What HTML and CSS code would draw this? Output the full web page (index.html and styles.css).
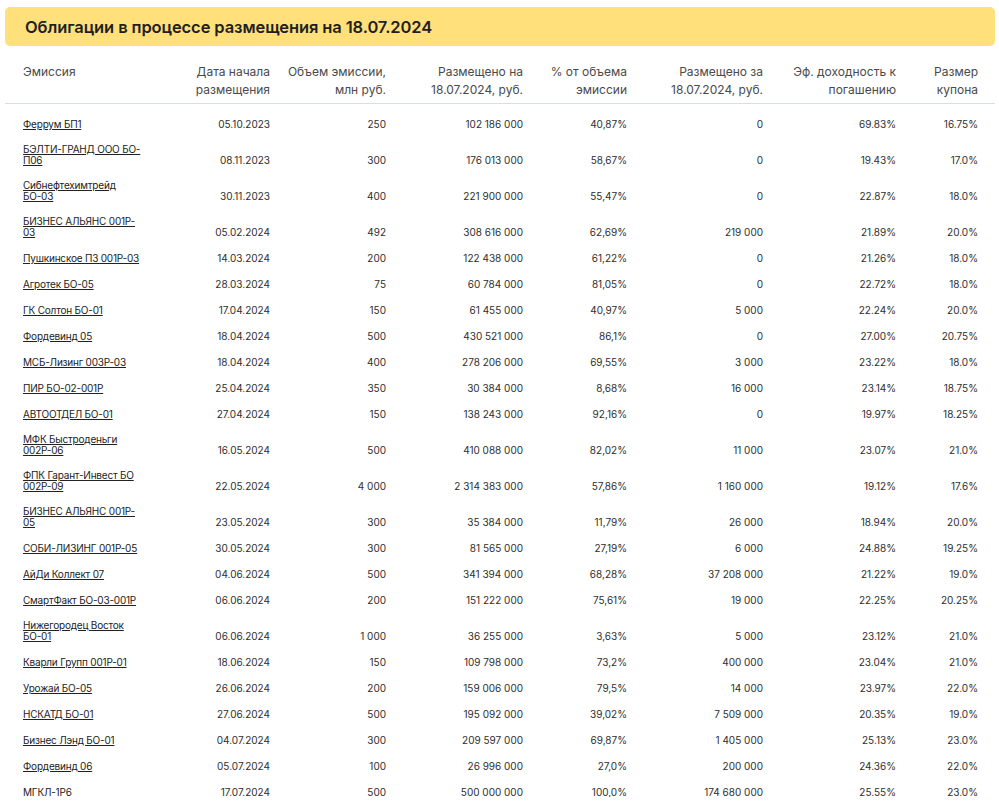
FILE: index.html
```html
<!DOCTYPE html>
<html lang="ru">
<head>
<meta charset="utf-8">
<title>Облигации в процессе размещения</title>
<link rel="stylesheet" href="styles.css">
</head>
<body>
<div class="page">
  <div class="banner"><h1 class="banner-title">Облигации в процессе размещения на 18.07.2024</h1></div>
  <table class="bonds">
    <colgroup>
      <col class="c-name"><col class="c-date"><col class="c-vol"><col class="c-placed"><col class="c-pct"><col class="c-day"><col class="c-yield"><col class="c-coupon">
    </colgroup>
    <thead>
      <tr>
        <th class="left">Эмиссия</th>
        <th>Дата начала<br>размещения</th>
        <th>Объем эмиссии,<br>млн руб.</th>
        <th>Размещено на<br>18.07.2024, руб.</th>
        <th>% от объема<br>эмиссии</th>
        <th>Размещено за<br>18.07.2024, руб.</th>
        <th>Эф. доходность к<br>погашению</th>
        <th>Размер<br>купона</th>
      </tr>
    </thead>
    <tbody>
      <tr><td class="left"><a href="#">Феррум БП1</a></td><td>05.10.2023</td><td>250</td><td>102 186 000</td><td>40,87%</td><td>0</td><td>69.83%</td><td>16.75%</td></tr>
      <tr><td class="left"><a href="#">БЭЛТИ-ГРАНД ООО БО-<br>П06</a></td><td>08.11.2023</td><td>300</td><td>176 013 000</td><td>58,67%</td><td>0</td><td>19.43%</td><td>17.0%</td></tr>
      <tr><td class="left"><a href="#">Сибнефтехимтрейд<br>БО-03</a></td><td>30.11.2023</td><td>400</td><td>221 900 000</td><td>55,47%</td><td>0</td><td>22.87%</td><td>18.0%</td></tr>
      <tr><td class="left"><a href="#">БИЗНЕС АЛЬЯНС 001Р-<br>03</a></td><td>05.02.2024</td><td>492</td><td>308 616 000</td><td>62,69%</td><td>219 000</td><td>21.89%</td><td>20.0%</td></tr>
      <tr><td class="left"><a href="#">Пушкинское ПЗ 001Р-03</a></td><td>14.03.2024</td><td>200</td><td>122 438 000</td><td>61,22%</td><td>0</td><td>21.26%</td><td>18.0%</td></tr>
      <tr><td class="left"><a href="#">Агротек БО-05</a></td><td>28.03.2024</td><td>75</td><td>60 784 000</td><td>81,05%</td><td>0</td><td>22.72%</td><td>18.0%</td></tr>
      <tr><td class="left"><a href="#">ГК Солтон БО-01</a></td><td>17.04.2024</td><td>150</td><td>61 455 000</td><td>40,97%</td><td>5 000</td><td>22.24%</td><td>20.0%</td></tr>
      <tr><td class="left"><a href="#">Фордевинд 05</a></td><td>18.04.2024</td><td>500</td><td>430 521 000</td><td>86,1%</td><td>0</td><td>27.00%</td><td>20.75%</td></tr>
      <tr><td class="left"><a href="#">МСБ-Лизинг 003Р-03</a></td><td>18.04.2024</td><td>400</td><td>278 206 000</td><td>69,55%</td><td>3 000</td><td>23.22%</td><td>18.0%</td></tr>
      <tr><td class="left"><a href="#">ПИР БО-02-001Р</a></td><td>25.04.2024</td><td>350</td><td>30 384 000</td><td>8,68%</td><td>16 000</td><td>23.14%</td><td>18.75%</td></tr>
      <tr><td class="left"><a href="#">АВТООТДЕЛ БО-01</a></td><td>27.04.2024</td><td>150</td><td>138 243 000</td><td>92,16%</td><td>0</td><td>19.97%</td><td>18.25%</td></tr>
      <tr><td class="left"><a href="#">МФК Быстроденьги<br>002Р-06</a></td><td>16.05.2024</td><td>500</td><td>410 088 000</td><td>82,02%</td><td>11 000</td><td>23.07%</td><td>21.0%</td></tr>
      <tr><td class="left"><a href="#">ФПК Гарант-Инвест БО<br>002Р-09</a></td><td>22.05.2024</td><td>4 000</td><td>2 314 383 000</td><td>57,86%</td><td>1 160 000</td><td>19.12%</td><td>17.6%</td></tr>
      <tr><td class="left"><a href="#">БИЗНЕС АЛЬЯНС 001Р-<br>05</a></td><td>23.05.2024</td><td>300</td><td>35 384 000</td><td>11,79%</td><td>26 000</td><td>18.94%</td><td>20.0%</td></tr>
      <tr><td class="left"><a href="#">СОБИ-ЛИЗИНГ 001Р-05</a></td><td>30.05.2024</td><td>300</td><td>81 565 000</td><td>27,19%</td><td>6 000</td><td>24.88%</td><td>19.25%</td></tr>
      <tr><td class="left"><a href="#">АйДи Коллект 07</a></td><td>04.06.2024</td><td>500</td><td>341 394 000</td><td>68,28%</td><td>37 208 000</td><td>21.22%</td><td>19.0%</td></tr>
      <tr><td class="left"><a href="#">СмартФакт БО-03-001Р</a></td><td>06.06.2024</td><td>200</td><td>151 222 000</td><td>75,61%</td><td>19 000</td><td>22.25%</td><td>20.25%</td></tr>
      <tr><td class="left"><a href="#">Нижегородец Восток<br>БО-01</a></td><td>06.06.2024</td><td>1 000</td><td>36 255 000</td><td>3,63%</td><td>5 000</td><td>23.12%</td><td>21.0%</td></tr>
      <tr><td class="left"><a href="#">Кварли Групп 001Р-01</a></td><td>18.06.2024</td><td>150</td><td>109 798 000</td><td>73,2%</td><td>400 000</td><td>23.04%</td><td>21.0%</td></tr>
      <tr><td class="left"><a href="#">Урожай БО-05</a></td><td>26.06.2024</td><td>200</td><td>159 006 000</td><td>79,5%</td><td>14 000</td><td>23.97%</td><td>22.0%</td></tr>
      <tr><td class="left"><a href="#">НСКАТД БО-01</a></td><td>27.06.2024</td><td>500</td><td>195 092 000</td><td>39,02%</td><td>7 509 000</td><td>20.35%</td><td>19.0%</td></tr>
      <tr><td class="left"><a href="#">Бизнес Лэнд БО-01</a></td><td>04.07.2024</td><td>300</td><td>209 597 000</td><td>69,87%</td><td>1 405 000</td><td>25.13%</td><td>23.0%</td></tr>
      <tr><td class="left"><a href="#">Фордевинд 06</a></td><td>05.07.2024</td><td>100</td><td>26 996 000</td><td>27,0%</td><td>200 000</td><td>24.36%</td><td>22.0%</td></tr>
      <tr><td class="left"><a href="#">МГКЛ-1Р6</a></td><td>17.07.2024</td><td>500</td><td>500 000 000</td><td>100,0%</td><td>174 680 000</td><td>25.55%</td><td>23.0%</td></tr>
    </tbody>
  </table>
</div>
</body>
</html>
```

FILE: styles.css
```css
* { box-sizing: border-box; }
html, body { margin: 0; padding: 0; background: #fff; }
body {
  font-family: Inter, "Noto Sans", "DejaVu Sans", sans-serif;
  color: #2b2b2b;
}
.page {
  padding: 7px 4px 0 5px;
}
.banner {
  background: #ffe07a;
  border-radius: 5px;
  height: 39px;
  display: flex;
  align-items: center;
  padding-left: 20px;
}
.banner-title {
  margin: 0;
  font-size: 16.5px;
  font-weight: 600;
  color: #1f1f1f;
  letter-spacing: -0.1px;
}
.bonds {
  width: 990px;
  border-collapse: collapse;
  table-layout: fixed;
}
.c-name { width: 145px; }
.c-date { width: 120px; }
.c-vol { width: 116px; }
.c-placed { width: 137px; }
.c-pct { width: 104px; }
.c-day { width: 136px; }
.c-yield { width: 133px; }
.c-coupon { width: 99px; }

.bonds th {
  font-weight: 400;
  font-size: 12px;
  line-height: 18px;
  color: #4a4a4a;
  text-align: right;
  vertical-align: top;
  padding: 17px 0 4px 0;
  border-bottom: 1px solid #d9dee5;
  white-space: nowrap;
}
.bonds th:last-child,
.bonds td:last-child { padding-right: 17px; }
.bonds th.left { text-align: left; padding-left: 18px; }

.bonds td {
  font-size: 10px;
  line-height: 10px;
  color: #2e2e2e;
  text-align: right;
  vertical-align: bottom;
  padding: 16px 0 0 0;
  white-space: nowrap;
}
.bonds tbody tr:first-child td { padding-top: 15px; }
.bonds td.left,
.bonds tbody tr:first-child td.left {
  text-align: left;
  padding: 14px 0 0 18px;
  line-height: 11px;
}
.bonds td.left a {
  position: relative;
  top: 1px;
  color: #222;
  letter-spacing: -0.2px;
  text-decoration: underline;
  text-underline-offset: 1px;
}
```
